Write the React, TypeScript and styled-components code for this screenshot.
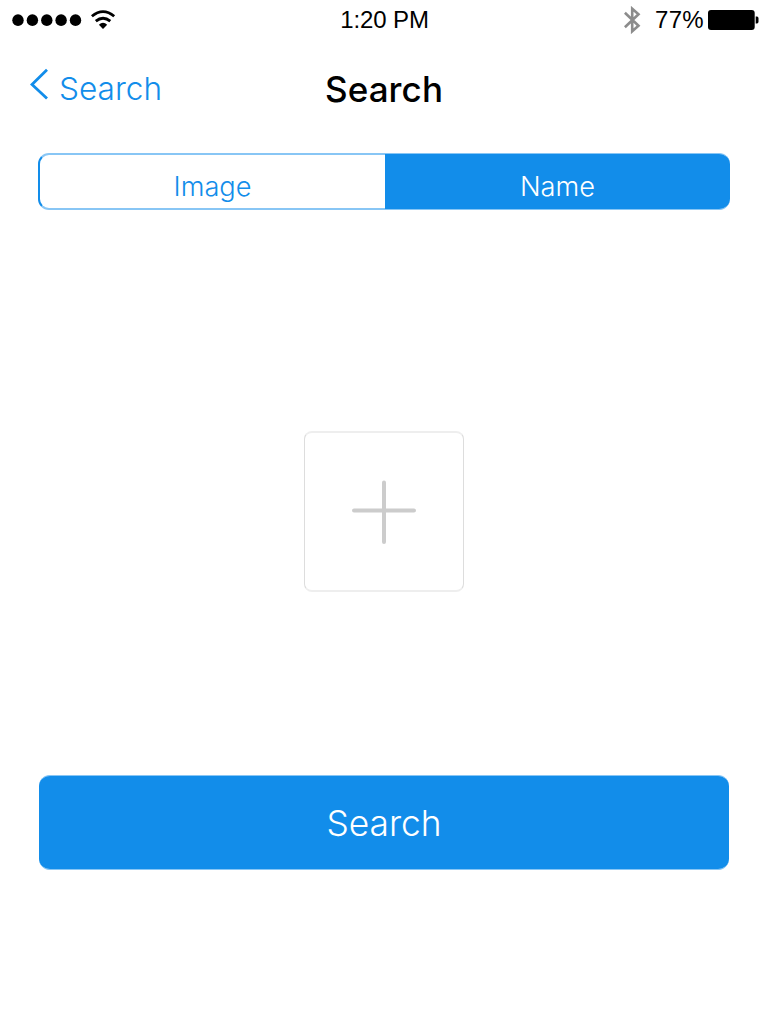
import React from "react";
import styled, { createGlobalStyle } from "styled-components";

const blue = "#128dea";
const softBlue = "#88c6f5";

const GlobalStyle = createGlobalStyle`
  * { box-sizing: border-box; }
  body { margin: 0; background: #fff; font-family: Inter, "Liberation Sans", sans-serif; }
  button { margin: 0; padding: 0; border: 0; background: none; font: inherit; color: inherit; }
  svg { display: block; flex: none; }
`;

const Screen = styled.div`
  width: 768px;
  height: 1024px;
  overflow: hidden;
  display: flex;
  flex-direction: column;
  background: #fff;
`;

const StatusBar = styled.header`
  height: 40px;
  flex: none;
  display: grid;
  grid-template-columns: 1fr auto 1fr;
  padding: 0 9px 0 12px;
  font-family: "Liberation Sans", sans-serif;
  font-size: 24px;
  line-height: 40px;
  color: #000;
`;

const Signal = styled.div`
  display: flex;
  align-items: center;
  gap: 8px;
`;

const Clock = styled.time`
  margin-right: 2px;
  letter-spacing: -0.1px;
`;

const Power = styled.div`
  display: flex;
  align-items: center;
  justify-content: flex-end;
`;

const Percent = styled.span`
  margin: 0 4px 0 14px;
  letter-spacing: 0.3px;
`;

const NavBar = styled.nav`
  height: 88px;
  flex: none;
  display: grid;
  grid-template-columns: 1fr auto 1fr;
  align-items: start;
  padding: 0 30px;
`;

const BackLink = styled.button`
  display: flex;
  align-items: flex-start;
  gap: 11px;
  padding-top: 28px;
  color: ${blue};
  font-size: 31.6px;
  font-weight: 340;
  line-height: 41px;
`;

const Title = styled.h1`
  margin: 27px 0 0;
  font-size: 35px;
  font-weight: 480;
  line-height: 44px;
  letter-spacing: 0.1px;
  color: #000;
`;

const Segments = styled.div`
  display: grid;
  grid-template-columns: 347px 345px;
  height: 57px;
  flex: none;
  margin: 25px 38px 0;
`;

const Segment = styled.button<{ $selected?: boolean }>`
  padding-top: ${(p) => (p.$selected ? 11 : 10)}px;
  border-style: solid;
  border-color: ${softBlue} ${blue};
  border-width: ${(p) => (p.$selected ? "1px 0" : "2px 0 2px 2px")};
  border-radius: ${(p) => (p.$selected ? "0 11px 11px 0" : "11px 0 0 11px")};
  background: ${(p) => (p.$selected ? blue : "#fff")};
  color: ${(p) => (p.$selected ? "#fff" : blue)};
  font-size: 27.2px;
  font-weight: 340;
  line-height: 34px;
`;

const AddImage = styled.button`
  display: flex;
  align-items: center;
  justify-content: center;
  width: 160px;
  height: 161px;
  flex: none;
  align-self: center;
  margin-top: 221px;
  border-style: solid;
  border-width: 2px 1px;
  border-color: #eee #ddd;
  border-radius: 8px;
`;

const SearchButton = styled.button`
  height: 95px;
  flex: none;
  margin: 183px 39px 0;
  padding-top: 2px;
  border-style: solid;
  border-width: 1px 0;
  border-color: ${softBlue};
  border-radius: 11px;
  background: ${blue};
  color: #fff;
  font-size: 35.3px;
  font-weight: 330;
  line-height: 44px;
`;

const SignalDots = () => (
  <svg width="70" height="14" viewBox="0 0 70 14">
    {[6, 20.4, 34.8, 49.1, 63.5].map((x) => (
      <ellipse key={x} cx={x} cy="7.2" rx="5.7" ry="5.9" />
    ))}
  </svg>
);

const WifiIcon = () => (
  <svg width="26" height="20" viewBox="0 0 26 20" fill="none" stroke="#000" strokeWidth="2.8">
    <path d="M1.9 6.3Q13 -3.1 24.2 6.3" />
    <path d="M5.8 11.2Q13 5.2 20.3 11.2" />
    <path d="M8.9 14.7Q13 11 17.2 14.7L13 19Z" fill="#000" stroke="none" />
  </svg>
);

const BluetoothIcon = () => (
  <svg width="17" height="28" viewBox="0 0 17 28" fill="none" stroke="#8c8c8c" strokeWidth="2.6">
    <path d="M.9 6.8L14.5 19.7L8.2 25.3V2.7L14.5 8.3L.9 21.2" />
  </svg>
);

const BatteryIcon = () => (
  <svg width="51" height="20" viewBox="0 0 51 20">
    <rect x="0" y="0" width="46.7" height="20" rx="3" />
    <path d="M47.7 6.5H49Q50.5 6.5 50.5 8.5V11.5Q50.5 13.5 49 13.5H47.7Z" />
  </svg>
);

const BackIcon = () => (
  <svg width="18" height="32" viewBox="0 0 18 32" fill="none" stroke={blue} strokeWidth="2.8">
    <path d="M17 1.8L2 16.4L17 30.6" />
  </svg>
);

const PlusIcon = () => (
  <svg width="64" height="65" viewBox="0 0 64 65" fill="none" stroke="#ccc" strokeWidth="4" strokeLinecap="round">
    <path d="M32 3.5V63M2 31.5H62" />
  </svg>
);

export default function App() {
  return (
    <>
      <GlobalStyle />
      <Screen>
        <StatusBar>
          <Signal>
            <SignalDots />
            <WifiIcon />
          </Signal>
          <Clock>1:20 PM</Clock>
          <Power>
            <BluetoothIcon />
            <Percent>77%</Percent>
            <BatteryIcon />
          </Power>
        </StatusBar>
        <NavBar>
          <BackLink>
            <BackIcon />
            <span>Search</span>
          </BackLink>
          <Title>Search</Title>
        </NavBar>
        <Segments>
          <Segment>Image</Segment>
          <Segment $selected>Name</Segment>
        </Segments>
        <AddImage aria-label="Add image">
          <PlusIcon />
        </AddImage>
        <SearchButton>Search</SearchButton>
      </Screen>
    </>
  );
}
